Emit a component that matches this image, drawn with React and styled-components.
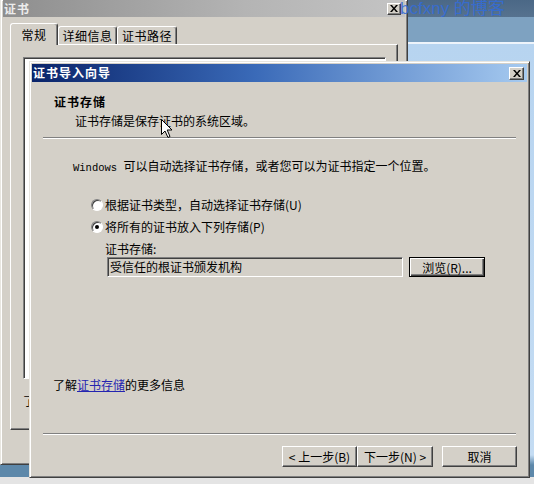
import React from 'react';
import styled, { createGlobalStyle, css } from 'styled-components';

const FONT = `"Noto Sans CJK SC", "Noto Sans", "Liberation Sans", sans-serif`;

const GlobalStyle = createGlobalStyle`
  html, body { margin: 0; padding: 0; }
  body { width: 534px; height: 484px; overflow: hidden; font-family: ${FONT}; font-size: 12px; }
`;

const Desktop = styled.div`
  position: relative;
  width: 534px;
  height: 484px;
  overflow: hidden;
  font-family: ${FONT};
  font-size: 12px;
  color: #000;
  background: linear-gradient(
    to bottom,
    #4b6886 0,
    #56728f 17px,
    #7ea2c1 17px,
    #7ea2c1 42px,
    #eef4fb 42px,
    #eef4fb 44px,
    #b7d4f0 44px,
    #c4dcf3 455px,
    #5d88aa 465px,
    #5d88aa 477px,
    #e4e4e4 477px
  );
`;

const BlogTitle = styled.div`
  position: absolute;
  left: 400px;
  top: -1px;
  font-family: "Liberation Sans", "Noto Sans CJK SC", sans-serif;
  font-size: 17px;
  line-height: 20px;
  color: rgba(52, 108, 214, 0.9);
  white-space: nowrap;
  z-index: 3;
`;

const Window = styled.section`
  position: absolute;
  left: ${(p) => p.$x}px;
  top: ${(p) => p.$y}px;
  width: ${(p) => p.$w}px;
  height: ${(p) => p.$h}px;
  box-sizing: border-box;
  background: #d4d0c8;
  border: 1px solid;
  border-color: #e8e6e0 #404040 #404040 #e8e6e0;
  box-shadow: inset 1px 1px #fff, inset -1px -1px #808080;
  padding: 2px;
  display: flex;
  flex-direction: column;
  z-index: ${(p) => (p.$active ? 2 : 1)};
  ${(p) =>
    p.$cropTop &&
    css`
      border-top: 0;
      padding-top: 0;
    `}
`;

const TitleBar = styled.header`
  flex: none;
  height: ${(p) => p.$h}px;
  display: flex;
  align-items: center;
  padding: 0 ${(p) => p.$pr}px 0 1px;
  background: ${(p) =>
    p.$active
      ? 'linear-gradient(to right, #0a246a, #3a6ab8 45%, #a6caf0)'
      : 'linear-gradient(to right, #8e8e8e, #b4b4b4 60%, #c4c4c4)'};
`;

const TitleText = styled.span`
  flex: 1;
  color: ${(p) => (p.$active ? '#fff' : '#ececec')};
  font-weight: bold;
  font-size: 12px;
  letter-spacing: 1px;
  line-height: 14px;
`;

const CloseBtn = styled.span`
  box-sizing: border-box;
  width: ${(p) => p.$w}px;
  height: ${(p) => p.$h}px;
  display: flex;
  align-items: center;
  justify-content: center;
  background: #d4d0c8;
  border: 1px solid;
  border-color: #fff #404040 #404040 #fff;
  box-shadow: inset -1px -1px #808080;
`;

const XGlyph = () => (
  <svg width="8" height="7" viewBox="0 0 8 7">
    <path d="M0 0 L2 0 L4 2.5 L6 0 L8 0 L5 3.5 L8 7 L6 7 L4 4.5 L2 7 L0 7 L3 3.5 Z" fill="#000" />
  </svg>
);

/* ---------- background window ---------- */

const TabStrip = styled.div`
  display: flex;
  align-items: flex-end;
  padding: 6px 7px 0 7px;
  position: relative;
  z-index: 1;
`;

const Tab = styled.div`
  box-sizing: border-box;
  width: ${(p) => p.$w}px;
  height: ${(p) => (p.$selected ? 22 : 18)}px;
  margin-bottom: ${(p) => (p.$selected ? -1 : 0)}px;
  display: flex;
  align-items: center;
  justify-content: center;
  background: #d4d0c8;
  border: 1px solid;
  border-bottom: 0;
  border-color: #fff #404040 transparent #fff;
  border-radius: 3px 3px 0 0;
  box-shadow: inset -1px 0 #808080;
  font-size: 12px;
  letter-spacing: 0.5px;
`;

const TabPanel = styled.div`
  box-sizing: border-box;
  height: 386px;
  margin: 0 7px;
  border: 1px solid;
  border-color: #fff #404040 #404040 #fff;
  box-shadow: inset -1px -1px #808080;
  display: flex;
  flex-direction: column;
`;

const InfoFrame = styled.div`
  box-sizing: border-box;
  width: 363px;
  height: 322px;
  margin: 12px 0 0 12px;
  background: #fff;
  border: 1px solid;
  border-color: #808080 #fff #fff #808080;
  box-shadow: inset 1px 1px #404040;
`;

const PanelNote = styled.div`
  margin: 14px 0 0 12px;
  line-height: 16px;
`;

/* ---------- wizard ---------- */

const HeaderTitle = styled.div`
  margin: 12px 0 0 22px;
  font-weight: bold;
  line-height: 16px;
  letter-spacing: 1px;
`;

const HeaderSub = styled.div`
  margin: 3px 0 0 43px;
  line-height: 16px;
`;

const Separator = styled.div`
  flex: none;
  height: 0;
  margin: ${(p) => p.$top}px 11px 0 11px;
  border-top: 1px solid #808080;
  border-bottom: 1px solid #fff;
`;

const Intro = styled.div`
  margin: 19px 0 0 41px;
  line-height: 16px;
  white-space: nowrap;
`;

const Latin = styled.span`
  font-family: "Liberation Mono", monospace;
  font-size: 10.5px;
`;

const RadioRow = styled.div`
  display: flex;
  align-items: center;
  gap: 2px;
  margin: ${(p) => p.$top}px 0 0 59px;
  line-height: 16px;
`;

const Radio = styled.span`
  position: relative;
  flex: none;
  box-sizing: border-box;
  width: 12px;
  height: 12px;
  border-radius: 50%;
  border: 1px solid;
  border-color: #808080 #fff #fff #808080;
  background: #fff;
  box-shadow: inset 1px 1px 0 #404040;
  ${(p) =>
    p.$checked &&
    css`
      &::after {
        content: '';
        position: absolute;
        left: 3px;
        top: 3px;
        width: 4px;
        height: 4px;
        border-radius: 50%;
        background: #000;
      }
    `}
`;

const FieldLabel = styled.div`
  margin: 6px 0 0 73px;
  line-height: 16px;
`;

const FieldRow = styled.div`
  display: flex;
  align-items: flex-start;
  gap: 6px;
  margin-left: 75px;
`;

const Field = styled.div`
  box-sizing: border-box;
  width: 296px;
  height: 20px;
  padding: 0 2px;
  line-height: 18px;
  background: #d4d0c8;
  border: 1px solid;
  border-color: #808080 #fff #fff #808080;
  box-shadow: inset 1px 1px #404040, inset -1px -1px #d4d0c8;
`;

const Button = styled.button`
  box-sizing: border-box;
  width: ${(p) => p.$w}px;
  height: ${(p) => p.$h || 21}px;
  margin: 0;
  margin-left: ${(p) => p.$ml || 0}px;
  padding: 0;
  background: #d4d0c8;
  font-family: ${FONT};
  font-size: 12px;
  color: #000;
  white-space: pre;
  border: 1px solid;
  border-color: #fff #404040 #404040 #fff;
  box-shadow: inset -1px -1px #808080;
  ${(p) =>
    p.$default &&
    css`
      border-color: #000;
      box-shadow: inset 1px 1px #fff, inset -1px -1px #404040, inset -2px -2px #808080;
    `}
`;

const Spacer = styled.div`
  flex: 1;
`;

const MoreInfo = styled.div`
  margin: 0 0 40px 21px;
  line-height: 16px;
`;

const Link = styled.span`
  color: #2424b0;
  text-decoration: underline;
`;

const ButtonRow = styled.div`
  display: flex;
  justify-content: flex-end;
  margin-top: 11px;
  padding: 0 10px 8px 0;
`;

const Cursor = styled.svg`
  position: absolute;
  left: 161px;
  top: 119px;
  z-index: 5;
`;

export default function App() {
  return (
    <>
      <GlobalStyle />
      <Desktop>
        <Window $x={0} $y={0} $w={408} $h={465} $cropTop>
          <TitleBar $h={17} $pr={4}>
            <TitleText>证书</TitleText>
            <CloseBtn $w={14} $h={12}>
              <XGlyph />
            </CloseBtn>
          </TitleBar>
          <TabStrip>
            <Tab $w={48} $selected>常规</Tab>
            <Tab $w={59}>详细信息</Tab>
            <Tab $w={60}>证书路径</Tab>
          </TabStrip>
          <TabPanel>
            <InfoFrame />
            <PanelNote>了解证书的详细信息</PanelNote>
          </TabPanel>
        </Window>

        <BlogTitle>bcfxny 的博客</BlogTitle>

        <Window $x={29} $y={61} $w={501} $h={417} $active>
          <TitleBar $h={18} $pr={3} $active>
            <TitleText $active>证书导入向导</TitleText>
            <CloseBtn $w={15} $h={13}>
              <XGlyph />
            </CloseBtn>
          </TitleBar>
          <HeaderTitle>证书存储</HeaderTitle>
          <HeaderSub>证书存储是保存证书的系统区域。</HeaderSub>
          <Separator $top={8} />
          <Intro>
            <Latin>Windows </Latin>可以自动选择证书存储，或者您可以为证书指定一个位置。
          </Intro>
          <RadioRow $top={21}>
            <Radio />
            <span>根据证书类型，自动选择证书存储(U)</span>
          </RadioRow>
          <RadioRow $top={6}>
            <Radio $checked />
            <span>将所有的证书放入下列存储(P)</span>
          </RadioRow>
          <FieldLabel>证书存储:</FieldLabel>
          <FieldRow>
            <Field>受信任的根证书颁发机构</Field>
            <Button $w={76} $h={20} $default>浏览(R)...</Button>
          </FieldRow>
          <Spacer />
          <MoreInfo>
            了解<Link>证书存储</Link>的更多信息
          </MoreInfo>
          <Separator $top={0} />
          <ButtonRow>
            <Button $w={75}>{'< 上一步(B)'}</Button>
            <Button $w={76}>{'下一步(N) >'}</Button>
            <Button $w={75} $ml={9}>取消</Button>
          </ButtonRow>
        </Window>

        <Cursor width="13" height="20" viewBox="0 0 13 20">
          <path
            d="M0.5 0.5 L0.5 15.5 L4 12 L7 18.5 L9 17.5 L6.2 11 L11 11 Z"
            fill="#fff"
            stroke="#000"
            strokeWidth="1"
          />
        </Cursor>
      </Desktop>
    </>
  );
}
